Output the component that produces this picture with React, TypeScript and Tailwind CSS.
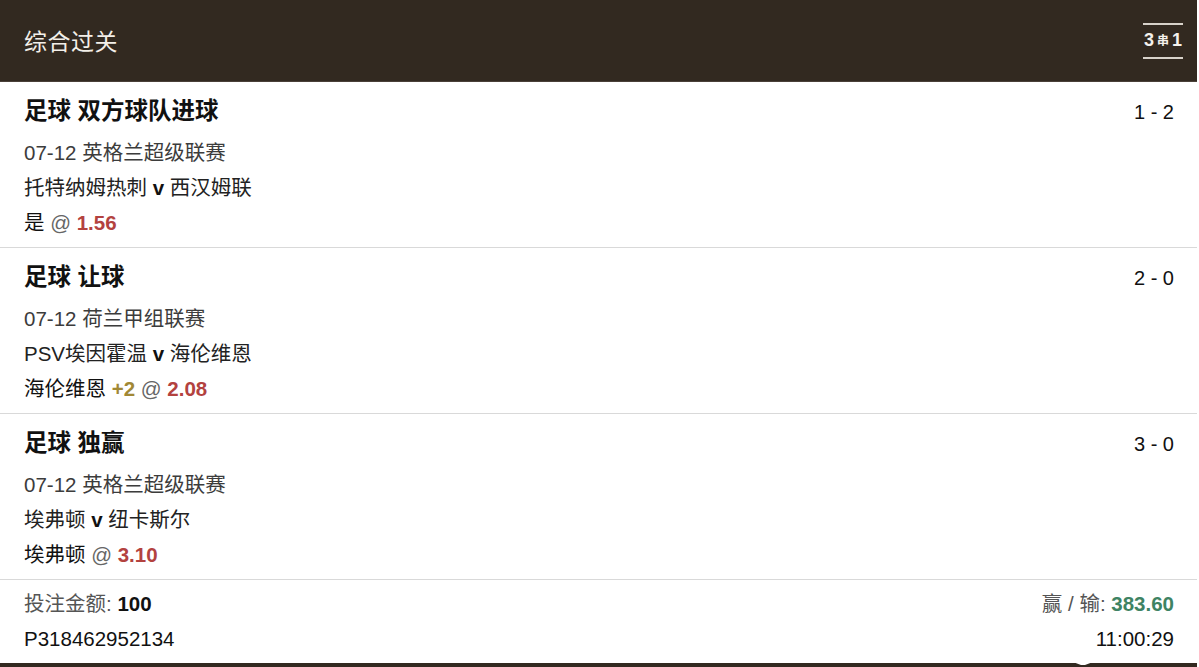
import React from 'react';

type Leg = {
  market: string;
  score: string;
  date: string;
  league: string;
  home: string;
  away: string;
  pick: string;
  handicap?: string;
  odds: string;
};

const legs: Leg[] = [
  {
    market: '足球 双方球队进球',
    score: '1 - 2',
    date: '07-12',
    league: '英格兰超级联赛',
    home: '托特纳姆热刺',
    away: '西汉姆联',
    pick: '是',
    odds: '1.56',
  },
  {
    market: '足球 让球',
    score: '2 - 0',
    date: '07-12',
    league: '荷兰甲组联赛',
    home: 'PSV埃因霍温',
    away: '海伦维恩',
    pick: '海伦维恩',
    handicap: '+2',
    odds: '2.08',
  },
  {
    market: '足球 独赢',
    score: '3 - 0',
    date: '07-12',
    league: '英格兰超级联赛',
    home: '埃弗顿',
    away: '纽卡斯尔',
    pick: '埃弗顿',
    odds: '3.10',
  },
];

const font = { fontFamily: '"Liberation Sans", "Noto Sans CJK SC", sans-serif' };

const App: React.FC = () => {
  return (
    <div className="w-[1197px] bg-white text-[#111]" style={font}>
      <header className="h-[82px] bg-[#322920] border-b border-[#4a4038] flex items-center justify-between pl-6 pr-[14px]">
        <h1 className="text-[23px] text-[#f3efe9] tracking-[0.5px] pt-[3px]">综合过关</h1>
        <div className="flex flex-col items-center w-[40px]">
          <div className="w-[40px] h-[2px] bg-[#d8d2ca]"></div>
          <div className="h-[32px] flex items-center gap-[3px] text-[#f5f1ec] font-bold">
            <span className="text-[18px]">3</span>
            <span className="text-[12px]">串</span>
            <span className="text-[18px]">1</span>
          </div>
          <div className="w-[40px] h-[2px] bg-[#d8d2ca]"></div>
        </div>
      </header>

      {legs.map((leg, idx) => (
        <section key={idx} className="border-b border-[#d9d9d9] pl-6 pr-[23px] pt-3 pb-[6px]">
          <div className="h-9 flex items-center justify-between">
            <h2 className="text-[23.5px] font-bold text-[#111]">{leg.market}</h2>
            <span className="text-[20px] text-[#111]">{leg.score}</span>
          </div>
          <div className="mt-1.5 text-[20.5px]">
            <div className="h-[35px] flex items-center text-[#3c3c3c]">
              <span>
                {leg.date} {leg.league}
              </span>
            </div>
            <div className="h-[35px] flex items-center text-[#222]">
              <span>
                {leg.home} <b className="text-[#111]">v</b> {leg.away}
              </span>
            </div>
            <div className="h-[35px] flex items-center text-[#111]">
              <span>
                {leg.pick}{' '}
                {leg.handicap && (
                  <>
                    <b className="text-[#a18835]">{leg.handicap}</b>{' '}
                  </>
                )}
                <span className="text-[#666]">@</span> <b className="text-[#b3423f]">{leg.odds}</b>
              </span>
            </div>
          </div>
        </section>
      ))}

      <footer className="pl-6 pr-[23px] pt-[7px] pb-[6px] text-[20.5px]">
        <div className="h-[35px] flex items-center justify-between">
          <span className="text-[#555]">
            投注金额: <b className="text-[#111]">100</b>
          </span>
          <span className="text-[#555]">
            赢 / 输: <b className="text-[#3e8363]">383.60</b>
          </span>
        </div>
        <div className="h-[35px] flex items-center justify-between text-[#111]">
          <span>P318462952134</span>
          <span>11:00:29</span>
        </div>
      </footer>
      <div className="relative h-[4px] bg-[#322920]">
        <svg className="absolute left-[1073px] -top-[1px]" width="20" height="4" viewBox="0 0 20 4">
          <path d="M0 0 L20 0 L12 3 L8 3 Z" fill="#ffffff" />
        </svg>
      </div>
    </div>
  );
};

export default App;
